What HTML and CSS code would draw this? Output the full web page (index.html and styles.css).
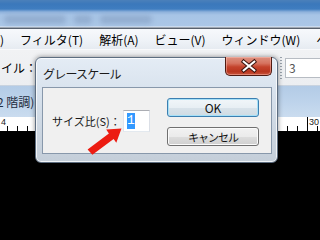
FILE: index.html
```html
<!DOCTYPE html>
<html lang="ja">
<head>
<meta charset="utf-8">
<link rel="stylesheet" href="styles.css">
</head>
<body>
<div class="screen">
  <div class="titlebar">
    <span class="blob b1"></span>
    <span class="blob b2"></span>
    <span class="blob b3"></span>
  </div>
  <div class="menubar">
    <span class="mi first">)</span>
    <span class="mi">フィルタ(T)</span>
    <span class="mi">解析(A)</span>
    <span class="mi">ビュー(V)</span>
    <span class="mi">ウィンドウ(W)</span>
    <span class="mi">ヘルプ(H)</span>
  </div>
  <div class="toolbar">
    <span class="tlabel">スタイル：</span>
    <span class="tspacer"></span>
    <span class="grip"></span>
    <span class="tfield">3</span>
  </div>
  <div class="tabbar"><span class="tab">2 階調)</span></div>
  <div class="ruler">
    <span class="rnum">4</span>
    <span class="rspacer"></span>
    <span class="major"></span>
    <span class="rnum">30</span>
  </div>
  <div class="canvas"></div>

  <div class="dialog">
    <div class="dtitle">
      <span class="dtext">グレースケール</span>
      <span class="close">
        <svg width="47" height="18" viewBox="0 0 47 18">
          <path d="M18.5 4.5 L29.5 13.5 M29.5 4.5 L18.5 13.5" stroke="#3b1510" stroke-width="4.2" stroke-linecap="square" fill="none"/>
          <path d="M18.5 4.5 L29.5 13.5 M29.5 4.5 L18.5 13.5" stroke="#ffffff" stroke-width="2.2" stroke-linecap="square" fill="none"/>
        </svg>
      </span>
    </div>
    <div class="client">
      <div class="field-group">
        <span class="flabel">サイズ比(S)：</span>
        <span class="input"><span class="sel">1</span></span>
      </div>
      <div class="buttons">
        <span class="btn default">OK</span>
        <span class="btn cancel">キャンセル</span>
      </div>
    </div>
  </div>

  <svg class="arrow" width="320" height="240" viewBox="0 0 320 240">
    <polygon points="87.6,149.4 108.9,133.5 106.2,129.6 121.5,128.6 116.3,142.8 113.6,138.9 92.4,154.8" fill="#ec1c12"/>
  </svg>
</div>
</body>
</html>
```

FILE: styles.css
```css
* { box-sizing: border-box; }
html, body { margin: 0; padding: 0; }
body {
  width: 320px;
  height: 240px;
  overflow: hidden;
  background: #000;
  font-family: "Noto Sans CJK JP", "Noto Sans", sans-serif;
  color: #000;
}
.screen {
  position: relative;
  width: 320px;
  height: 240px;
  display: flex;
  flex-direction: column;
  overflow: hidden;
}
.titlebar {
  height: 29px;
  flex: none;
  background: linear-gradient(180deg, #4b80ba 0px, #3b78bb 4px, #3f7dc0 9px, #8fb2dc 12px, #a7c4e6 15px, #abc7e7 26px, #e8eef6 27px, #58616d 28px);
  overflow: hidden;
  display: flex;
  align-items: flex-start;
  padding: 15px 0 0 4px;
  gap: 8px;
}
.blob {
  height: 9px;
  border-radius: 4px;
  background: #8ea9cc;
  filter: blur(2.5px);
  opacity: 0.8;
}
.b1 { width: 62px; }
.b2 { width: 18px; }
.b3 { width: 52px; }
.menubar {
  height: 21px;
  flex: none;
  display: flex;
  align-items: center;
  white-space: nowrap;
  font-size: 12px;
  line-height: 21px;
  background: linear-gradient(180deg, #f7f9fc 0%, #eef2f7 60%, #e6ebf1 100%);
  border-bottom: 1px solid #f8f9fb;
}
.mi { padding: 0 8px; flex: none; }
.mi.first { padding-left: 0; }
.toolbar {
  height: 36px;
  flex: none;
  display: flex;
  align-items: center;
  background: linear-gradient(180deg, #f1f2f4 0%, #eceef1 100%);
  border-bottom: 1px solid #c9d3df;
  font-size: 12px;
  white-space: nowrap;
}
.tlabel { margin-left: -23px; }
.tspacer { flex: 1; }
.grip {
  width: 2px;
  height: 22px;
  margin-right: 3px;
  background: repeating-linear-gradient(180deg, #9aa3ad 0 1px, transparent 1px 3px);
}
.tfield {
  width: 36px;
  height: 20px;
  margin-right: -1px;
  background: #fff;
  border: 1px solid #b7bcc3;
  border-right: none;
  font-size: 12px;
  line-height: 18px;
  padding-left: 3px;
  color: #555;
}
.tabbar {
  height: 31px;
  flex: none;
  display: flex;
  align-items: center;
  background: linear-gradient(180deg, #b3cbe6 0%, #bdd3eb 50%, #cadcef 100%);
  font-size: 12px;
  white-space: nowrap;
}
.tab { margin-left: -3px; color: #1f2d40; }
.ruler {
  height: 14px;
  flex: none;
  display: flex;
  align-items: flex-start;
  background-color: #fff;
  background-image: repeating-linear-gradient(90deg, #000 0 1px, transparent 1px 10px);
  background-size: 100% 5px;
  background-position: 7px bottom;
  background-repeat: no-repeat;
  font-size: 9px;
  line-height: 10px;
  font-family: "Liberation Sans", sans-serif;
}
.rnum { padding: 0 1px; color: #222; }
.rspacer { flex: 1; }
.major { width: 1px; height: 14px; background: #000; }
.canvas { flex: 1; background: #000; }

.dialog {
  position: absolute;
  left: 35px;
  top: 57px;
  width: 243px;
  height: 106px;
  border: 1px solid #5d6d80;
  border-radius: 6px;
  background: linear-gradient(180deg, #e4ecf5 0%, #d9e3ee 30%, #ccd6e1 70%, #c4ced9 100%);
  box-shadow: inset 0 0 0 1px rgba(255,255,255,0.75), 0 0 5px rgba(0,0,0,0.45);
  display: flex;
  flex-direction: column;
}
.dtitle {
  height: 29px;
  flex: none;
  display: flex;
  align-items: center;
  padding-left: 7px;
}
.dtext {
  flex: 1;
  font-size: 12px;
  letter-spacing: -0.8px;
  color: #1a1a1a;
  white-space: nowrap;
  margin-top: 1px;
}
.close {
  align-self: flex-start;
  width: 47px;
  height: 19px;
  margin-top: -1px;
  margin-right: 5px;
  border: 1px solid #4f1b12;
  border-top: none;
  border-radius: 0 0 5px 5px;
  background: linear-gradient(180deg, #dd9180 0%, #d6735f 35%, #c4432c 55%, #b9361f 80%, #c9553c 100%);
  box-shadow: inset 0 0 0 1px rgba(255,200,190,0.45);
  display: flex;
}
.client {
  height: 67px;
  flex: none;
  margin: 0 5px 0 6px;
  border: 1px solid #8898ab;
  background: #f0f0f0;
  display: flex;
  align-items: flex-start;
  padding: 10px 0 0 9px;
}
.field-group {
  width: 98px;
  margin-top: 12px;
  display: flex;
  align-items: center;
  justify-content: space-between;
}
.flabel {
  font-size: 11px;
  white-space: nowrap;
  color: #1a1a1a;
}
.input {
  width: 27px;
  height: 22px;
  background: #fff;
  border: 1px solid #abadb3;
  border-color: #abadb3 #dbdfe6 #e3e9ef #e2e3ea;
  padding: 2px 0 0 3px;
  display: flex;
  align-items: flex-start;
}
.sel {
  width: 8px;
  height: 16px;
  background: #3399ff;
  color: #fff;
  font-family: "Liberation Mono", monospace;
  font-size: 13px;
  line-height: 16px;
  text-align: center;
}
.buttons {
  margin-left: 17px;
  display: flex;
  flex-direction: column;
  gap: 10px;
}
.btn {
  width: 92px;
  height: 19px;
  border-radius: 3px;
  display: flex;
  align-items: center;
  justify-content: center;
  color: #111;
  white-space: nowrap;
}
.btn.default {
  font-size: 12px;
  border: 1px solid #3c7fb1;
  box-shadow: inset 0 0 0 1px #a6e0f7;
  background: linear-gradient(180deg, #f1f6f9 0%, #e8eff4 50%, #d9e3ea 51%, #cfdbe3 100%);
}
.btn.cancel {
  font-size: 11px;
  letter-spacing: -1px;
  border: 1px solid #707070;
  box-shadow: inset 0 0 0 1px #fbfbfb;
  background: linear-gradient(180deg, #f2f2f2 0%, #ebebeb 50%, #dddddd 51%, #cfcfcf 100%);
}
.arrow {
  position: absolute;
  left: 0;
  top: 0;
  pointer-events: none;
}
```
